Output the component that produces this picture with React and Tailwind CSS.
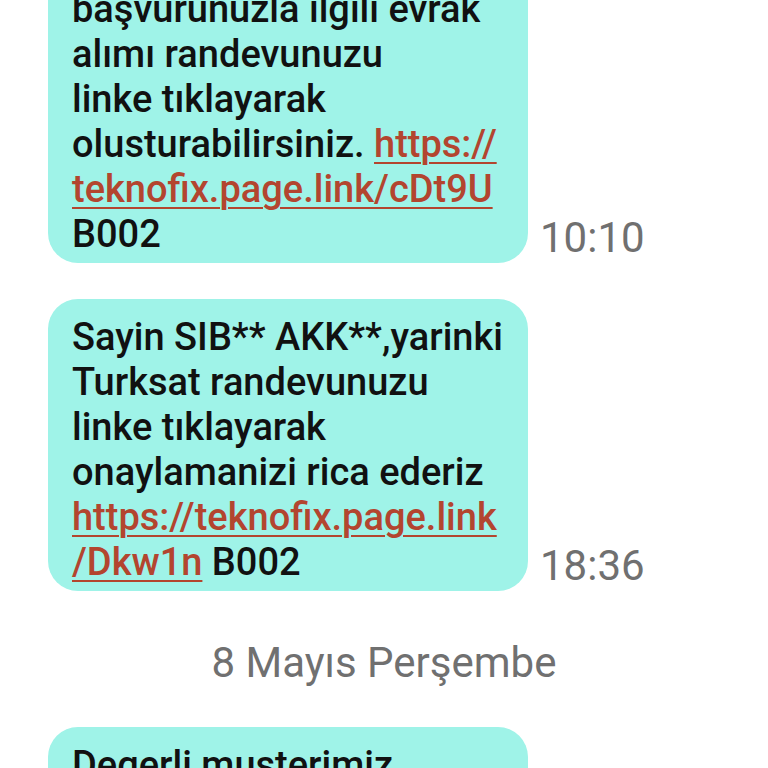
import React from 'react';

const Link = ({ children }) => (
    <span className="text-[#b3452f] underline decoration-2 underline-offset-[5px]">{children}</span>
);

const Bubble = ({ children, time, className = '' }) => (
    <div className={`flex items-end gap-3 ${className}`}>
        <div className="w-[480px] shrink-0 rounded-[30px] bg-[#9ff3e8] pl-6 pr-4 pt-4 pb-[6px] text-[38px] font-medium leading-[45px] text-[#111]">
            {children}
        </div>
        {time && (
            <div className="pb-[3px] text-[42px] leading-[45px] text-[#707070]">{time}</div>
        )}
    </div>
);

const App = () => {
    return (
        <div className="h-[768px] w-[768px] overflow-hidden bg-white" style={{ fontFamily: 'Roboto, "Noto Sans", sans-serif' }}>
            <div className="flex flex-col pl-12 -mt-[29px]">
                {/* first message, top cut off */}
                <Bubble time="10:10">
                    başvurunuzla ilgili evrak<br />
                    alımı randevunuzu<br />
                    linke tıklayarak<br />
                    olusturabilirsiniz. <Link>https://</Link><br />
                    <Link>teknofix.page.link/cDt9U</Link><br />
                    B002
                </Bubble>

                <Bubble time="18:36" className="mt-9">
                    Sayin SIB** AKK**,yarinki<br />
                    Turksat randevunuzu<br />
                    linke tıklayarak<br />
                    onaylamanizi rica ederiz<br />
                    <Link>https://teknofix.page.link</Link><br />
                    <Link>/Dkw1n</Link> B002
                </Bubble>

                {/* date divider */}
                <div className="-ml-12 mt-[49px] mb-[42px] text-center text-[42px] leading-[45px] text-[#707070]">
                    8 Mayıs Perşembe
                </div>

                <Bubble>
                    Degerli musterimiz<br />
                    ...
                </Bubble>
            </div>
        </div>
    );
};

export default App;
